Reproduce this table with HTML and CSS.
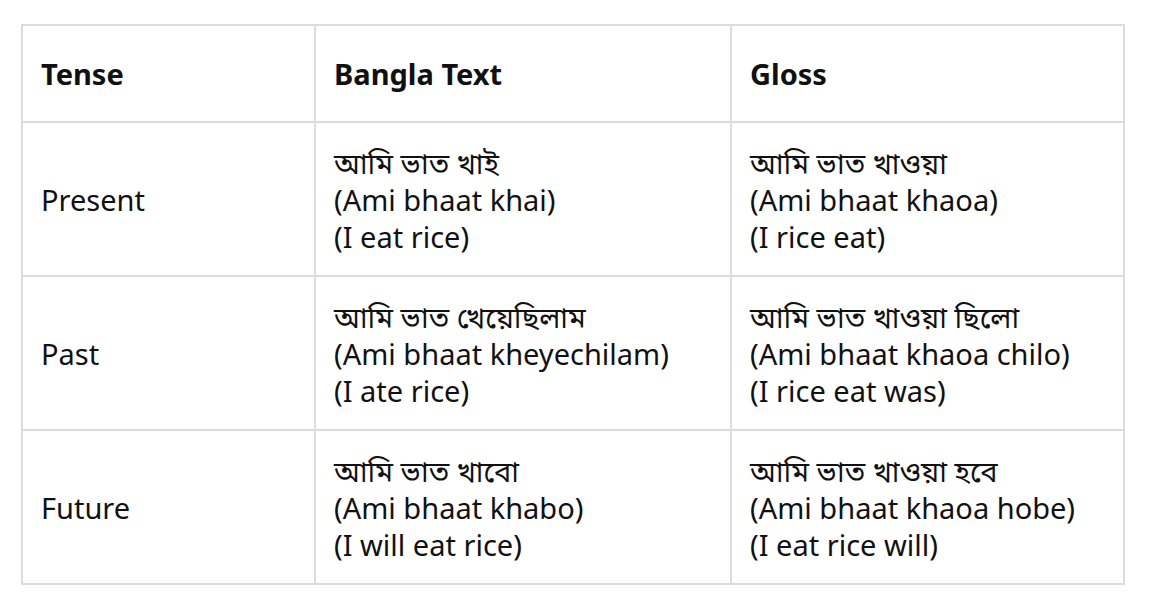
FILE: index.html
```html
<!DOCTYPE html>
<html>
<head>
<meta charset="utf-8">
<link rel="stylesheet" href="styles.css">
</head>
<body>
<div class="page">
<table class="tenses">
  <colgroup>
    <col class="c1"><col class="c2"><col class="c3">
  </colgroup>
  <thead>
    <tr><th>Tense</th><th>Bangla Text</th><th>Gloss</th></tr>
  </thead>
  <tbody>
    <tr>
      <td>Present</td>
      <td>আমি ভাত খাই<br>(Ami bhaat khai)<br>(I eat rice)</td>
      <td>আমি ভাত খাওয়া<br>(Ami bhaat khaoa)<br>(I rice eat)</td>
    </tr>
    <tr>
      <td>Past</td>
      <td>আমি ভাত খেয়েছিলাম<br>(Ami bhaat kheyechilam)<br>(I ate rice)</td>
      <td>আমি ভাত খাওয়া ছিলো<br>(Ami bhaat khaoa chilo)<br>(I rice eat was)</td>
    </tr>
    <tr>
      <td>Future</td>
      <td>আমি ভাত খাবো<br>(Ami bhaat khabo)<br>(I will eat rice)</td>
      <td>আমি ভাত খাওয়া হবে<br>(Ami bhaat khaoa hobe)<br>(I eat rice will)</td>
    </tr>
  </tbody>
</table>
</div>
</body>
</html>
```
FILE: styles.css
```css
html, body {
  margin: 0;
  padding: 0;
  background: #ffffff;
}
.page {
  padding: 24px 0 0 21px;
}
.tenses {
  border-collapse: collapse;
  width: 1102px;
  table-layout: fixed;
  font-family: "Noto Sans", "Noto Sans Bengali", "Open Sans", sans-serif;
  font-size: 29px;
  line-height: 37px;
  color: #111111;
}
.c1 { width: 293px; }
.c2 { width: 416px; }
.c3 { width: 393px; }
.tenses th, .tenses td {
  border: 2px solid #dcdcdc;
  padding: 0 17px 0 18px;
  text-align: left;
  vertical-align: middle;
}
.tenses th {
  height: 95px;
  font-weight: 700;
}
.tenses td {
  height: 152px;
  font-weight: 400;
}
```
